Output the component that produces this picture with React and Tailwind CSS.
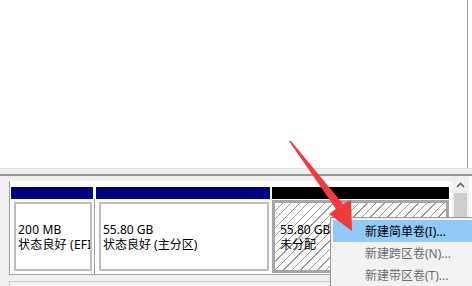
import React from "react";

const font = "font-['Noto_Sans','Noto_Sans_CJK_SC',sans-serif]";

function Partition({ width, bar, children, hatched }) {
    return (
        <div className={`flex flex-col ${width}`}>
            <div className={`h-[12px] ${bar}`} />
            {hatched ? (
                <div className="flex-1 pt-[1px] pb-[1px]">
                    <div className="h-full border-[3px] border-[#a6a6a6] bg-white bg-[repeating-linear-gradient(135deg,transparent_0px,transparent_5px,#9a9a9a_5px,#9a9a9a_6px)] flex flex-col justify-center pl-[5px] overflow-hidden whitespace-nowrap text-[12px] leading-[15px] text-black">
                        {children}
                    </div>
                </div>
            ) : (
                <div className="flex-1 bg-white pt-[3px] pl-[3px] pr-[1px] pb-[3px]">
                    <div className="h-full border-2 border-[#bdbdbd] bg-white flex flex-col justify-center pl-[2px] overflow-hidden whitespace-nowrap text-[12px] leading-[15px] text-black">
                        {children}
                    </div>
                </div>
            )}
        </div>
    );
}

function Sep({ width }) {
    return (
        <div className={`flex flex-col ${width} bg-white`}>
            <div className="h-[12px]" />
            <div className="flex-1 flex justify-center">
                <div className="w-px bg-[#a0a0a0]" />
            </div>
        </div>
    );
}

export default function App() {
    return (
        <div className={`relative w-[472px] h-[286px] overflow-hidden bg-[#f0f0f0] ${font}`}>
            {/* volume list pane */}
            <div className="flex h-[168px]">
                <div className="w-[468px] bg-white border-r border-[#a0a0a0]" />
                <div className="flex-1 bg-white" />
            </div>
            {/* splitter */}
            <div className="h-[8px] border-t border-[#e3e3e3] border-b-2 border-b-[#9a9a9a] bg-[#f0f0f0]" />

            {/* disk pane */}
            <div className="flex h-[110px]">
                <div className="w-[452px] pl-[9px] pt-[5px]">
                    <div className="flex border-l border-b border-[#a0a0a0] h-[94px] pl-[1px] pt-[6px] bg-white">
                        <Partition width="w-[82px]" bar="bg-[#000080]">
                            <span className="tracking-[0.2px]">200 MB</span>
                            <span className="tracking-[0.2px]">状态良好 (EFI 系统分区)</span>
                        </Partition>
                        <Sep width="w-[3px]" />
                        <Partition width="w-[174px]" bar="bg-[#000080]">
                            <span>55.80 GB</span>
                            <span>状态良好 (主分区)</span>
                        </Partition>
                        <div className="w-[2px] bg-white" />
                        <Partition width="w-[177px]" bar="bg-black" hatched>
                            <span>55.80 GB</span>
                            <span>未分配</span>
                        </Partition>
                    </div>
                    <div className="mt-[6px] h-[20px] border-l border-t border-[#c8c8c8] bg-[#f0f0f0]" />
                </div>
                {/* scrollbar */}
                <div className="w-[17px] flex flex-col bg-[#f0f0f0] pt-[1px]">
                    <div className="h-[16px] flex items-center justify-center">
                        <svg width="9" height="6" viewBox="0 0 9 6">
                            <path d="M1 5 L4.5 1.5 L8 5" fill="none" stroke="#606060" strokeWidth="1.6" />
                        </svg>
                    </div>
                    <div className="flex-1 mx-[2px] bg-[#cdcdcd]" />
                </div>
                <div className="flex-1 bg-white" />
            </div>

            {/* context menu */}
            <div className="absolute left-[330px] top-[217px] w-[160px] h-[80px] border border-[#979797] bg-[#f2f2f2] p-[2px] text-[12px] leading-[15px]">
                <div className="h-[22px] flex items-center pl-[32px] bg-[#91c9f7] text-black">新建简单卷(I)...</div>
                <div className="h-[22px] flex items-center pl-[32px] text-[#6d6d6d]">新建跨区卷(N)...</div>
                <div className="h-[22px] flex items-center pl-[32px] text-[#6d6d6d]">新建带区卷(T)...</div>
            </div>

            {/* red arrow */}
            <svg className="absolute left-0 top-0" width="472" height="286" viewBox="0 0 472 286">
                <polygon
                    points="289,141 291,141 343,204 351,200 352,231 329,214 336,209"
                    fill="#f03a3c"
                />
            </svg>
        </div>
    );
}
